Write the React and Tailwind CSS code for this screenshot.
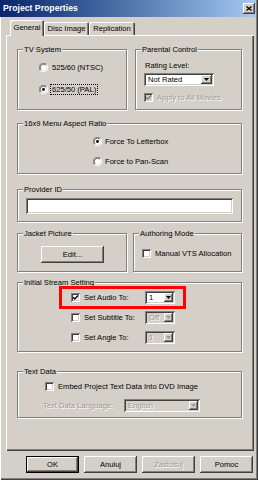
import React from "react";

const raised =
  "shadow-[inset_-1px_-1px_0_#404040,inset_1px_1px_0_#ffffff,inset_-2px_-2px_0_#808080]";
const sunken =
  "shadow-[inset_1px_1px_0_#808080,inset_-1px_-1px_0_#ffffff,inset_2px_2px_0_#404040,inset_-2px_-2px_0_#d4d0c8]";
const disabledText = "text-[#9a9893] [text-shadow:1px_1px_0_#ffffff]";

function Radio({ checked }) {
  return (
    <svg width="9" height="9" viewBox="0 0 9 9" className="shrink-0">
      <path d="M7.6 1.4 A4 4 0 0 0 1.4 7.6" fill="none" stroke="#808080" strokeWidth="1" />
      <path d="M1.4 7.6 A4 4 0 0 0 7.6 1.4" fill="none" stroke="#ffffff" strokeWidth="1" />
      <circle cx="4.5" cy="4.5" r="3.2" fill="#ffffff" />
      <path d="M6.8 2.2 A3.2 3.2 0 0 0 2.2 6.8" fill="none" stroke="#404040" strokeWidth="0.8" />
      {checked && <circle cx="4.5" cy="4.5" r="1.4" fill="#000000" />}
    </svg>
  );
}

function Check({ checked, disabled }) {
  return (
    <span
      className={
        disabled
          ? "shrink-0 w-[9px] h-[9px] bg-[#d4d0c8] flex items-center justify-center shadow-[inset_1px_1px_0_#808080,inset_-1px_-1px_0_#ffffff,inset_2px_2px_0_#404040,inset_-2px_-2px_0_#d4d0c8]"
          : "shrink-0 w-[9px] h-[9px] bg-white flex items-center justify-center shadow-[inset_1px_1px_0_#808080,inset_-1px_-1px_0_#ffffff,inset_2px_2px_0_#404040,inset_-2px_-2px_0_#d4d0c8]"
      }
    >
      {checked && (
        <svg width="7" height="7" viewBox="0 0 7 7">
          <path
            d="M1 3.2 L2.8 5 L6 1.6"
            fill="none"
            stroke={disabled ? "#808080" : "#000000"}
            strokeWidth="1.4"
          />
        </svg>
      )}
    </span>
  );
}

function Arrow({ disabled, w }) {
  return (
    <span
      className={
        w === "big"
          ? "w-[11px] h-full bg-[#d4d0c8] flex items-center justify-center shadow-[inset_-1px_-1px_0_#404040,inset_1px_1px_0_#ffffff,inset_-2px_-2px_0_#808080]"
          : "w-[9px] h-full bg-[#d4d0c8] flex items-center justify-center shadow-[inset_-1px_-1px_0_#404040,inset_1px_1px_0_#ffffff,inset_-2px_-2px_0_#808080]"
      }
    >
      <svg width="5" height="3" viewBox="0 0 5 3">
        <path d="M0 0 H5 L2.5 3 Z" fill={disabled ? "#9a9893" : "#000000"} />
      </svg>
    </span>
  );
}

function Select({ value, disabled, className, big }) {
  return (
    <div
      className={`${className} flex items-stretch p-[2px] ${sunken} ${
        disabled ? "bg-[#d4d0c8]" : "bg-white"
      }`}
    >
      <span
        className={`flex-1 flex items-center pl-[2px] leading-none ${
          disabled ? disabledText : ""
        }`}
      >
        {value}
      </span>
      <Arrow disabled={disabled} w={big ? "big" : "small"} />
    </div>
  );
}

function Group({ title, className, children }) {
  return (
    <div
      className={`relative border border-[#808080] shadow-[inset_1px_1px_0_#ffffff,1px_1px_0_#ffffff] ${className}`}
    >
      <span className="absolute left-[5px] top-[-5px] bg-[#d4d0c8] px-[1px] leading-[9px] whitespace-nowrap">
        {title}
      </span>
      {children}
    </div>
  );
}

function Button({ children, isDefault, disabled }) {
  return (
    <div
      className={
        isDefault
          ? "w-[53px] h-[17px] border border-black flex items-center justify-center shadow-[inset_-1px_-1px_0_#404040,inset_1px_1px_0_#ffffff,inset_-2px_-2px_0_#808080]"
          : "w-[53px] h-[17px] flex items-center justify-center shadow-[inset_-1px_-1px_0_#404040,inset_1px_1px_0_#ffffff,inset_-2px_-2px_0_#808080]"
      }
    >
      <span className={disabled ? disabledText : ""}>{children}</span>
    </div>
  );
}

export default function App() {
  return (
    <div className="w-[258px] h-[480px] bg-[#d4d0c8] flex flex-col font-['Liberation_Sans',Arial,sans-serif] text-[7.6px] text-black shadow-[inset_1px_0_0_#ffffff,inset_-1px_-1px_0_#404040,inset_-2px_-2px_0_#808080] overflow-hidden">
      {/* Title bar */}
      <div className="h-[17px] mr-[2px] bg-linear-to-r from-[#0a246a] to-[#a6caf0] flex items-center justify-between pl-[3px] pr-[1px]">
        <span className="text-white font-bold text-[8.7px] leading-none">Project Properties</span>
        <div className={`w-[12px] h-[11px] bg-[#d4d0c8] flex items-center justify-center ${raised}`}>
          <svg width="6" height="5" viewBox="0 0 6 5">
            <path d="M0.5 0.5 L5.5 4.5 M5.5 0.5 L0.5 4.5" stroke="#000" strokeWidth="1.3" />
          </svg>
        </div>
      </div>

      {/* Tabs */}
      <div className="h-[18px] flex items-end pl-[10px]">
        <div className="relative z-10 h-[16px] mb-[-1px] w-[34px] bg-[#d4d0c8] rounded-t-[2px] flex items-center justify-center pb-[1px] shadow-[inset_1px_1px_0_#ffffff,inset_-1px_0_0_#404040,inset_-2px_0_0_#808080]">
          General
        </div>
        <div className="h-[13px] w-[45px] rounded-t-[2px] flex items-center justify-center shadow-[inset_1px_1px_0_#ffffff,inset_-1px_0_0_#404040,inset_-2px_0_0_#808080]">
          Disc Image
        </div>
        <div className="h-[13px] w-[46px] rounded-t-[2px] flex items-center justify-center shadow-[inset_1px_1px_0_#ffffff,inset_-1px_0_0_#404040,inset_-2px_0_0_#808080]">
          Replication
        </div>
      </div>

      {/* Panel */}
      <div className="ml-[6px] w-[248px] h-[416px] flex flex-col pl-[11px] shadow-[inset_1px_1px_0_#ffffff,inset_-1px_-1px_0_#404040,inset_-2px_-2px_0_#808080]">
        {/* Row 1 */}
        <div className="mt-[14px] flex gap-[8px]">
          <Group title="TV System" className="w-[110px] h-[61px]">
            <div className="flex flex-col pl-[21px] pt-[12px] gap-[11px]">
              <div className="h-[11px] flex items-center gap-[3px]">
                <Radio />
                <span className="px-[1px]">525/60 (NTSC)</span>
              </div>
              <div className="h-[11px] flex items-center gap-[2px]">
                <Radio checked />
                <span className="px-[1px] border border-dotted border-black leading-[9px]">625/50 (PAL)</span>
              </div>
            </div>
          </Group>
          <Group title="Parental Control" className="w-[107px] h-[61px]">
            <div className="flex flex-col pl-[8px] pt-[11px]">
              <span className="h-[9px] leading-[9px] ml-[1px]">Rating Level:</span>
              <Select value="Not Rated" className="mt-[3px] w-[70px] h-[13px]" big />
              <div className="mt-[7px] h-[9px] flex items-center gap-[4px]">
                <Check checked disabled />
                <span className={disabledText}>Apply to All Movies</span>
              </div>
            </div>
          </Group>
        </div>

        {/* Aspect */}
        <Group title="16x9 Menu Aspect Ratio" className="mt-[13px] w-[225px] h-[51px]">
          <div className="flex flex-col pl-[75px] pt-[12px] gap-[9px]">
            <div className="h-[11px] flex items-center gap-[3px]">
              <Radio checked />
              <span>Force To Letterbox</span>
            </div>
            <div className="h-[11px] flex items-center gap-[3px]">
              <Radio />
              <span>Force to Pan-Scan</span>
            </div>
          </div>
        </Group>

        {/* Provider */}
        <Group title="Provider ID" className="mt-[15px] w-[225px] h-[33px]">
          <div className="pl-[8px] pt-[8px]">
            <div className={`w-[207px] h-[16px] bg-white ${sunken}`} />
          </div>
        </Group>

        {/* Jacket / Authoring */}
        <div className="mt-[11px] flex gap-[6px]">
          <Group title="Jacket Picture" className="w-[110px] h-[39px]">
            <div className="pl-[23px] pt-[12px]">
              <div className={`w-[63px] h-[17px] flex items-center justify-center ${raised}`}>Edit...</div>
            </div>
          </Group>
          <Group title="Authoring Mode" className="w-[109px] h-[39px]">
            <div className="pl-[8px] pt-[15px] flex items-center gap-[4px] h-[24px]">
              <Check />
              <span>Manual VTS Allocation</span>
            </div>
          </Group>
        </div>

        {/* Initial Stream Setting */}
        <Group title="Initial Stream Setting" className="mt-[10px] w-[225px] h-[70px]">
          <div className="flex flex-col pl-[53px] pt-[8px] gap-[7px]">
            <div className="h-[13px] flex items-center">
              <Check checked />
              <span className="ml-[4px] w-[61px]">Set Audio To:</span>
              <Select value="1" className="w-[30px] h-[13px]" />
            </div>
            <div className="h-[13px] flex items-center">
              <Check />
              <span className="ml-[4px] w-[61px]">Set Subtitle To:</span>
              <Select value="Off" disabled className="w-[30px] h-[13px]" />
            </div>
            <div className="h-[13px] flex items-center">
              <Check />
              <span className="ml-[4px] w-[61px]">Set Angle To:</span>
              <Select value="1" disabled className="w-[30px] h-[13px]" />
            </div>
          </div>
          <div className="absolute left-[41px] top-[3px] w-[127px] h-[23px] border-[3px] border-[#ff0000]" />
        </Group>

        {/* Text Data */}
        <Group title="Text Data" className="mt-[19px] w-[225px] h-[47px]">
          <div className="flex flex-col pl-[25px] pt-[10px]">
            <div className="ml-[2px] h-[9px] flex items-center gap-[4px]">
              <Check />
              <span>Embed Project Text Data Into DVD Image</span>
            </div>
            <div className="mt-[8px] h-[13px] flex items-center">
              <span className={`w-[81px] ${disabledText}`}>Text Data Language:</span>
              <Select value="English" disabled className="w-[76px] h-[13px]" />
            </div>
          </div>
        </Group>
      </div>

      {/* Buttons */}
      <div className="mt-[5px] flex gap-[5px] pl-[26px]">
        <Button isDefault>OK</Button>
        <Button>Anuluj</Button>
        <Button disabled>Zastosuj</Button>
        <Button>Pomoc</Button>
      </div>
    </div>
  );
}
